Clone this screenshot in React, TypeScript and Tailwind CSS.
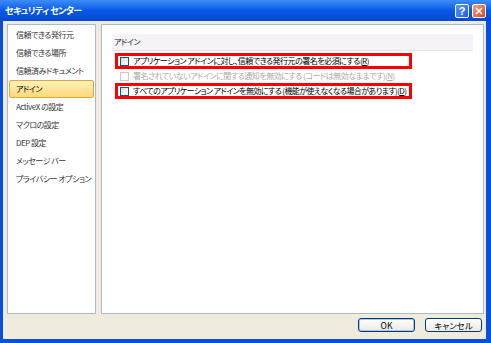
import React from "react";

const font = { fontFamily: '"Noto Sans CJK JP", "Noto Sans", sans-serif' };

const navItems = [
  "信頼できる発行元",
  "信頼できる場所",
  "信頼済みドキュメント",
  "アドイン",
  "ActiveX の設定",
  "マクロの設定",
  "DEP 設定",
  "メッセージ バー",
  "プライバシー オプション",
];

function Check({ disabled }: { disabled?: boolean }) {
  return (
    <span
      className={
        disabled
          ? "w-[9px] h-[9px] border border-[#c9c9c9] bg-white shrink-0"
          : "w-[9px] h-[9px] border border-[#1c5180] bg-gradient-to-br from-[#dcdcd6] to-white shrink-0"
      }
    />
  );
}

export default function App() {
  return (
    <div
      className="w-[491px] h-[343px] flex flex-col bg-[#0a4fd8] overflow-hidden text-[8px] tracking-[-0.5px] leading-none text-black whitespace-nowrap [font-feature-settings:'palt']"
      style={font}
    >
      {/* title bar */}
      <div className="h-[21px] flex items-center justify-between bg-gradient-to-b from-[#3d8cf7] via-[#0659e6] to-[#0349d0] pl-[5px] pr-[5px]">
        <span className="text-white font-bold text-[9px] tracking-[-0.6px]">セキュリティ センター</span>
        <div className="flex gap-[3px] pt-[1px]">
          <div className="w-[14px] h-[14px] rounded-[2px] border border-white bg-gradient-to-br from-[#5c9af7] to-[#1d5de0] flex items-center justify-center text-white font-bold text-[11px] tracking-normal" style={{ fontFamily: '"Liberation Sans", sans-serif' }}>
            ?
          </div>
          <div className="w-[14px] h-[14px] rounded-[2px] border border-white bg-gradient-to-br from-[#f0a080] to-[#d6431b] flex items-center justify-center">
            <svg width="8" height="8" viewBox="0 0 8 8">
              <path d="M1 1L7 7M7 1L1 7" stroke="white" strokeWidth="1.6" />
            </svg>
          </div>
        </div>
      </div>

      {/* body */}
      <div className="flex-1 flex flex-col bg-[#efebde] ml-[3px] mr-[5px] mb-[4px] pl-[4px] pr-[2px] pt-[3px]">
        <div className="flex gap-[5px] h-[290px]">
          {/* nav */}
          <div className="w-[89px] bg-white border border-[#a9bccf] pt-[1px]">
            {navItems.map((t) =>
              t === "アドイン" ? (
                <div
                  key={t}
                  className="h-[18px] mx-[1px] flex items-center pl-[6px] border border-[#e5a442] rounded-[2px] bg-gradient-to-b from-[#fff2b8] to-[#ffd87a]"
                >
                  {t}
                </div>
              ) : (
                <div key={t} className="h-[18px] mx-[1px] flex items-center pl-[7px] text-[#333]">
                  {t}
                </div>
              )
            )}
          </div>

          {/* content */}
          <div className="flex-1 bg-white border border-[#a9bccf] pt-[9px] pl-[10px] pr-[10px]">
            <div className="h-[17px] bg-[#f5f3f7] border-b border-[#e4e1ea] flex items-center pl-[2px] text-[#222]">
              アドイン
            </div>
            <div className="mt-[2px] ml-[3px] w-[297px] flex flex-col">
              <div className="h-[16px] border-[3px] border-[#ff0000] flex items-center pl-[2px] gap-[4px]">
                <Check />
                <span>
                  アプリケーション アドインに対し、信頼できる発行元の署名を必須にする(<span className="underline">R</span>)
                </span>
              </div>
              <div className="h-[14px] flex items-center pl-[5px] gap-[4px] text-[#ababab]">
                <Check disabled />
                <span>
                  署名されていないアドインに関する通知を無効にする (コードは無効なままです)(<span className="underline">N</span>)
                </span>
              </div>
              <div className="h-[16px] border-[3px] border-[#ff0000] flex items-center pl-[2px] gap-[4px] tracking-[-0.6px]">
                <Check />
                <span>
                  すべてのアプリケーション アドインを無効にする (機能が使えなくなる場合があります)(<span className="underline">D</span>)
                </span>
              </div>
            </div>
          </div>
        </div>

        {/* buttons */}
        <div className="flex justify-end gap-[10px] pr-[2px] pt-[4px]">
          <button className="w-[57px] h-[14px] rounded-[3px] border border-[#003c74] bg-gradient-to-b from-white to-[#ece9e0] flex items-center justify-center shadow-[inset_0_0_0_1px_#a8c8f0] text-[8.5px] tracking-normal">
            OK
          </button>
          <button className="w-[57px] h-[14px] rounded-[3px] border border-[#003c74] bg-gradient-to-b from-white to-[#ece9e0] flex items-center justify-center text-[8.5px] tracking-normal">
            キャンセル
          </button>
        </div>
      </div>
    </div>
  );
}
